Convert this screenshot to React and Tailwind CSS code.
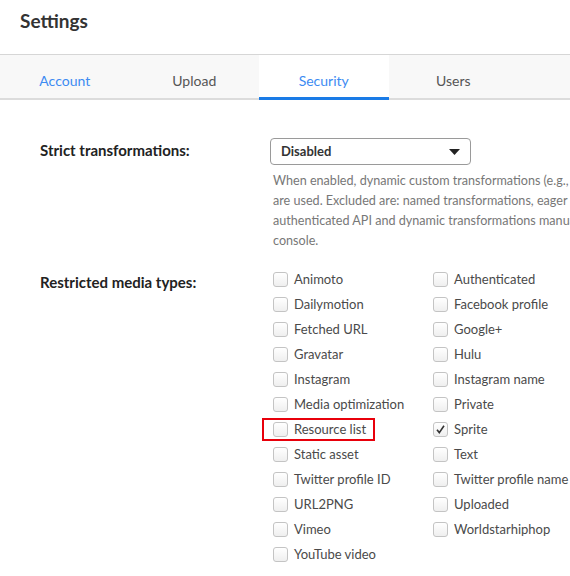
import React from 'react';

const leftTypes = ['Animoto', 'Dailymotion', 'Fetched URL', 'Gravatar', 'Instagram', 'Media optimization', 'Resource list', 'Static asset', 'Twitter profile ID', 'URL2PNG', 'Vimeo', 'YouTube video'];
const rightTypes = ['Authenticated', 'Facebook profile', 'Google+', 'Hulu', 'Instagram name', 'Private', 'Sprite', 'Text', 'Twitter profile name', 'Uploaded', 'Worldstarhiphop'];

function Check({ label, checked, highlight }) {
  return (
    <div className="relative flex h-[25px] items-center gap-[6px]">
      {highlight && <div className="pointer-events-none absolute left-[-11px] top-[1px] h-[23px] w-[113px] border-2 border-[#e8000b]" />}
      <span className="flex h-[15px] w-[15px] shrink-0 items-center justify-center rounded-[3px] border border-[#c4c4c4] bg-gradient-to-b from-white to-[#efefef]">
        {checked && (
          <svg width="11" height="11" viewBox="0 0 11 11">
            <path d="M2 5.8 L4.3 8.6 L9 1.8" fill="none" stroke="#333" strokeWidth="1.6" />
          </svg>
        )}
      </span>
      <span className="whitespace-nowrap text-[13px] text-[#4a4a4a]">{label}</span>
    </div>
  );
}

export default function App() {
  return (
    <div className="min-h-[576px] w-full overflow-hidden bg-white font-['Lato',sans-serif]">
      {/* Header */}
      <div className="flex h-[55px] items-center border-b border-[#d6d6d6] px-5 pb-[12px]">
        <h1 className="text-[19px] font-bold text-[#333]">Settings</h1>
      </div>

      {/* Tabs */}
      <div className="flex h-[45px] border-b-2 border-[#dcdcdc] bg-[#f8f8f8]">
        {['Account', 'Upload', 'Security', 'Users'].map((t) => (
          <div
            key={t}
            className={`flex w-[129.5px] shrink-0 items-center justify-center pt-[8px] text-[14px] ${
              t === 'Security' ? 'border-b-[3px] border-[#1a7be6] -mb-[2px] bg-white text-[#3d8bf2]' : t === 'Account' ? 'text-[#3d8bf2]' : 'text-[#555]'
            }`}
          >
            {t}
          </div>
        ))}
      </div>

      {/* Strict transformations */}
      <div className="flex pl-10 pt-[38px]">
        <div className="w-[230px] shrink-0 pt-[1px] text-[15px] font-bold text-[#222]">Strict transformations:</div>
        <div className="shrink-0">
          <div className="flex h-[27px] w-[201px] items-center justify-between rounded-[4px] border border-[#9a9a9a] pl-[10px] pr-[10px]">
            <span className="text-[13px] font-bold text-[#333]">Disabled</span>
            <svg width="11" height="6" viewBox="0 0 11 6"><path d="M0 0 H11 L5.5 6 Z" fill="#222" /></svg>
          </div>
          <div className="mt-[6px] pl-[3px] text-[12.6px] leading-[20px] text-[#777]">
            <div className="whitespace-nowrap">When enabled, dynamic custom transformations (e.g., URL-based) are blocked unless</div>
            <div className="whitespace-nowrap">are used. Excluded are: named transformations, eager transformations,</div>
            <div className="whitespace-nowrap">authenticated API and dynamic transformations manually allowed in the</div>
            <div className="whitespace-nowrap">console.</div>
          </div>
        </div>
      </div>

      {/* Restricted media types */}
      <div className="flex pl-10 pt-[16px]">
        <div className="w-[233px] shrink-0 pt-[4px] text-[15px] font-bold text-[#222]">Restricted media types:</div>
        <div className="flex shrink-0">
          <div className="w-[160px]">
            {leftTypes.map((l) => (
              <Check key={l} label={l} highlight={l === 'Resource list'} />
            ))}
          </div>
          <div>
            {rightTypes.map((l) => (
              <Check key={l} label={l} checked={l === 'Sprite'} />
            ))}
          </div>
        </div>
      </div>
    </div>
  );
}
